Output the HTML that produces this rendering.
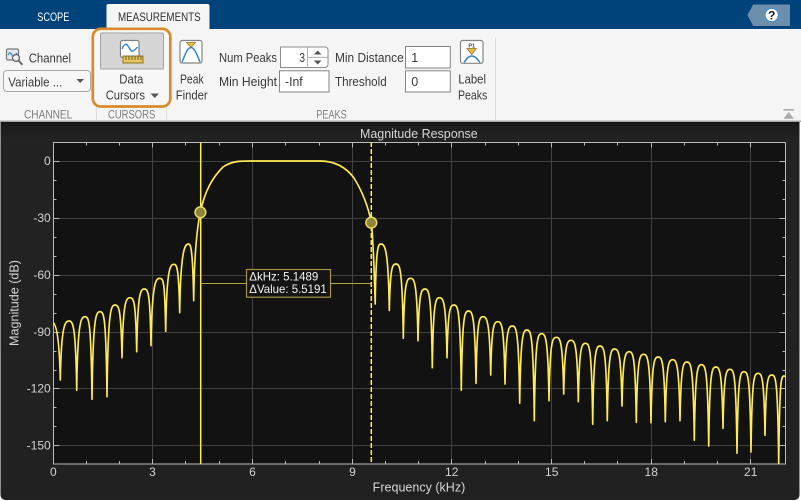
<!DOCTYPE html>
<html><head><meta charset="utf-8"><title>Magnitude Response</title>
<style>
html,body{margin:0;padding:0;background:#fff;width:801px;height:501px;overflow:hidden}
svg{display:block}
text{font-family:"Liberation Sans",sans-serif}
.r{font-size:12.6px;fill:#3a3a3a}
.g{font-size:11.5px;fill:#7c7c7c}
.t{font-size:12px;fill:#d2d2d2}
</style></head><body>
<svg width="801" height="501" viewBox="0 0 801 501" xmlns="http://www.w3.org/2000/svg">
<defs>
<linearGradient id="pg" x1="0" y1="0" x2="0" y2="1"><stop offset="0" stop-color="#131313"/><stop offset="0.015" stop-color="#1e1e1e"/><stop offset="0.05" stop-color="#222"/><stop offset="1" stop-color="#212121"/></linearGradient>
<clipPath id="pc"><rect x="53.5" y="142.5" width="732" height="321.5"/></clipPath>
</defs>
<!-- header -->
<rect x="0" y="0" width="801" height="29" fill="#00427a"/>
<rect x="0" y="29" width="801" height="93" fill="#f5f5f5"/>
<rect x="0" y="29" width="801" height="1" fill="#fdfdfd"/>
<path d="M106.5 29V6a2 2 0 0 1 2-2H207.5a2 2 0 0 1 2 2V30H106.5z" fill="#f5f5f5"/>
<text x="37.3" y="20.9" font-size="11.8" fill="#fff" textLength="32" lengthAdjust="spacingAndGlyphs">SCOPE</text>
<text x="118" y="20.9" font-size="11.8" fill="#303030" textLength="82.7" lengthAdjust="spacingAndGlyphs">MEASUREMENTS</text>
<!-- help -->
<path d="M753.3 4.5H790V26H753.3L747.3 15z" fill="#6d8fae"/>
<circle cx="771.7" cy="15" r="6.6" fill="#fff" stroke="#3d8fd6" stroke-width="1"/>
<text x="771.7" y="19.3" font-size="12" font-weight="bold" fill="#1a1a1a" text-anchor="middle">?</text>
<!-- separators -->
<path d="M96.5 36V120M166.5 36V120M495.5 38V120" stroke="#dcdcdc" stroke-width="1"/>
<!-- channel -->
<g fill="none">
<rect x="6.5" y="49" width="12" height="11" rx="1.5" fill="#e4e8ec" stroke="#777" stroke-width="1.2"/>
<path d="M8 55c1.500-3 2.500-3 4 0s2.500 1 5-2" stroke="#2f87d0" stroke-width="1.200"/>
<circle cx="16" cy="58" r="3.500" fill="#f5f5f5" fill-opacity=".75" stroke="#666" stroke-width="1.200"/>
<path d="M18.500 60.500L22.500 64.800" stroke="#666" stroke-width="2"/>
</g>
<text class="r" x="28.7" y="62.3" textLength="42.3" lengthAdjust="spacingAndGlyphs">Channel</text>
<rect x="3.5" y="70.5" width="87" height="21" rx="3.5" fill="#f7f7f7" stroke="#a8a8a8"/>
<text class="r" x="8.3" y="86.3" textLength="54" lengthAdjust="spacingAndGlyphs">Variable ...</text>
<path d="M76.5 79H84L80.2 83z" fill="#555"/>
<text class="g" x="24" y="118.7" textLength="48.3" lengthAdjust="spacingAndGlyphs">CHANNEL</text>
<!-- data cursors -->
<rect x="92.8" y="28.8" width="77.5" height="77.7" rx="8" fill="#f7f7f7" stroke="#d98a2b" stroke-width="2.7"/>
<rect x="100.5" y="33" width="63" height="36" rx="1" fill="#d5d5d5" stroke="#a2a2a2"/>
<rect x="120.5" y="40.5" width="18.5" height="17" rx="2" fill="#fff" stroke="#808080" stroke-width="1.2"/>
<path d="M122 49c2-5 4-6 6-3s3 6 5 5 3-2 4.500-4" fill="none" stroke="#2f87d0" stroke-width="1.400"/>
<rect x="123" y="56" width="20" height="7" fill="#e7c75f" stroke="#8d7228"/>
<path d="M126 60V56M129 60V56M132 60V56M135 60V56M138 60V56M141 60V56" stroke="#6d5a20" stroke-width="1"/>
<text class="r" x="119.3" y="83.3" textLength="24" lengthAdjust="spacingAndGlyphs">Data</text>
<text class="r" x="105.7" y="99.3" textLength="39.3" lengthAdjust="spacingAndGlyphs">Cursors</text>
<path d="M150.500 93.500H159L154.700 98z" fill="#555"/>
<text class="g" x="108" y="118.7" textLength="47.3" lengthAdjust="spacingAndGlyphs">CURSORS</text>
<!-- peak finder -->
<rect x="180" y="40.5" width="22" height="22.5" rx="2" fill="#fff" stroke="#858585" stroke-width="1.200"/>
<path d="M182 62C186 52 188 47.500 191 47.500S196 52 200 62" fill="none" stroke="#2f87d0" stroke-width="1.500"/>
<path d="M186.500 42.500H195.500L191 47.500z" fill="#e8c040" stroke="#8d7228" stroke-width=".7"/>
<text class="r" x="180" y="83.3" textLength="23.7" lengthAdjust="spacingAndGlyphs">Peak</text>
<text class="r" x="175.7" y="99.3" textLength="32" lengthAdjust="spacingAndGlyphs">Finder</text>
<!-- peaks fields -->
<text class="r" x="219" y="62" textLength="58" lengthAdjust="spacingAndGlyphs">Num Peaks</text>
<text class="r" x="219" y="86" textLength="58" lengthAdjust="spacingAndGlyphs">Min Height</text>
<path d="M280.500 47H325a3 3 0 0 1 3 3V64.500a3 3 0 0 1-3 3H280.500z" fill="#fff" stroke="#8c8c8c"/>
<path d="M307.500 47V67.500M308 57.300H328" stroke="#a0a0a0" stroke-width=".8" fill="none"/>
<text class="r" x="299.2" y="62" textLength="5.8" lengthAdjust="spacingAndGlyphs">3</text>
<path d="M313.800 54.500H321.500L317.700 50.500zM313.800 60.500H321.500L317.700 64.500z" fill="#555"/>
<rect x="279.5" y="70.8" width="49.5" height="21.2" fill="#fff" stroke="#858585"/>
<text class="r" x="285" y="86" textLength="17.7" lengthAdjust="spacingAndGlyphs">-Inf</text>
<text class="r" x="335" y="62" textLength="68.7" lengthAdjust="spacingAndGlyphs">Min Distance</text>
<text class="r" x="335" y="86" textLength="51.7" lengthAdjust="spacingAndGlyphs">Threshold</text>
<rect x="405.5" y="46.5" width="44.8" height="21.5" fill="#fff" stroke="#858585"/>
<rect x="405.5" y="70.8" width="44.8" height="21.2" fill="#fff" stroke="#858585"/>
<text class="r" x="411.3" y="62">1</text>
<text class="r" x="411.3" y="86">0</text>
<!-- label peaks -->
<rect x="460.5" y="40.5" width="22.5" height="22.8" rx="2" fill="#fff" stroke="#858585" stroke-width="1.200"/>
<text x="471.7" y="47.5" font-size="5.5" font-weight="bold" fill="#444" text-anchor="middle">P1</text>
<path d="M467 48.500H476.500L471.700 54.500z" fill="#e8c040" stroke="#8d7228" stroke-width=".7"/>
<path d="M464 62.500C467 58 469 56 471.700 56S477 58 480 62.500" fill="none" stroke="#2f87d0" stroke-width="1.500"/>
<text class="r" x="458.3" y="83.3" textLength="27.7" lengthAdjust="spacingAndGlyphs">Label</text>
<text class="r" x="458" y="99.3" textLength="29.3" lengthAdjust="spacingAndGlyphs">Peaks</text>
<text class="g" x="316.3" y="118.7" textLength="30.4" lengthAdjust="spacingAndGlyphs">PEAKS</text>
<!-- collapse -->
<path d="M783.500 109H794V110.600H783.500zM788.700 112L794 118.700H783.500z" fill="#ababab"/>
<rect x="0" y="120.5" width="801" height="1.5" fill="#a8a8a8"/>
<!-- dark panel -->
<path d="M0.500 122H799.500V495a5 5 0 0 1-5 5H5.500a5 5 0 0 1-5-5z" fill="url(#pg)"/>
<text x="360" y="138" font-size="13" fill="#d6d6d6" textLength="117.7" lengthAdjust="spacingAndGlyphs">Magnitude Response</text>
<!-- plot -->
<rect x="53.5" y="142.5" width="732" height="321.5" fill="#121212"/>
<path d="M152.500 142.500V464M252.500 142.500V464M352.500 142.500V464M451.500 142.500V464M551.500 142.500V464M651.500 142.500V464M750.500 142.500V464M53.500 161.500H785.500M53.500 218.500H785.500M53.500 275.500H785.500M53.500 332.500H785.500M53.500 388.500H785.500M53.500 445.500H785.500" stroke="#424242" stroke-width="1" fill="none"/>
<path fill="none" stroke="#b9b9b9" stroke-width="1" d="M86.500 142.500v3M119.500 142.500v3M152.500 142.500v5M185.500 142.500v3M219.500 142.500v3M252.500 142.500v5M285.500 142.500v3M319.500 142.500v3M352.500 142.500v5M385.500 142.500v3M418.500 142.500v3M451.500 142.500v5M485.500 142.500v3M518.500 142.500v3M551.500 142.500v5M584.500 142.500v3M617.500 142.500v3M651.500 142.500v5M684.500 142.500v3M717.500 142.500v3M750.500 142.500v5M86.500 464v-3M119.500 464v-3M152.500 464v-5M185.500 464v-3M219.500 464v-3M252.500 464v-5M285.500 464v-3M319.500 464v-3M352.500 464v-5M385.500 464v-3M418.500 464v-3M451.500 464v-5M485.500 464v-3M518.500 464v-3M551.500 464v-5M584.500 464v-3M617.500 464v-3M651.500 464v-5M684.500 464v-3M717.500 464v-3M750.500 464v-5M53.500 161.500h6M53.500 180.500h3M53.500 199.500h3M53.500 218.500h6M53.500 237.500h3M53.500 256.500h3M53.500 275.500h6M53.500 294.500h3M53.500 313.500h3M53.500 332.500h6M53.500 351.500h3M53.500 370.500h3M53.500 388.500h6M53.500 407.500h3M53.500 426.500h3M53.500 445.500h6M785.500 161.500h-6M785.500 180.500h-3M785.500 199.500h-3M785.500 218.500h-6M785.500 237.500h-3M785.500 256.500h-3M785.500 275.500h-6M785.500 294.500h-3M785.500 313.500h-3M785.500 332.500h-6M785.500 351.500h-3M785.500 370.500h-3M785.500 388.500h-6M785.500 407.500h-3M785.500 426.500h-3M785.500 445.500h-6"/>
<rect x="53.5" y="142.5" width="732" height="321.5" fill="none" stroke="#bcbcbc" stroke-width="1"/>
<!-- response -->
<g clip-path="url(#pc)">
<path fill="none" stroke="#ffeb55" stroke-width="1.650" stroke-linejoin="round" d="M53.300 322.700C56 325 59.300 335 60.300 380
C61.300 325 65 321 69 321C73 321 75.700 325 76.700 390.300
C77.700 320.700 81 316.700 85 316.700C89 316.700 91 320.700 92 399.300
C93 315.700 96 311.700 100 311.700C104 311.700 106 315.700 107 396.700
C108 309 111 305 115 305C119 305 121 309 122 357.700
C123 301.700 126 297.700 130 297.700C134 297.700 135.700 301.700 136.700 351.700
C137.700 293 140.300 289 144.300 289C148.300 289 150 293 151 345.700
C152 282.300 155.700 278.300 159.700 278.300C163.700 278.300 164.700 282.300 165.700 331.300
C166.700 268.300 170 264.300 174 264.300C177 264.300 178.700 268.300 179.700 312.700
C180.700 248 185 244 188.500 244C191 244 192.700 250 193.700 300.700
C194.200 262 196.500 230 200.400 212C205 190 213 177 223 167C232 161 240 161 250 161L320 161C333 161 345 166 354 178C362 191 368 205 371.300 222.700C372.800 235 374 262 375.200 304
C376 248 378 244 380.700 244C385 244 388.300 248 389.300 310.500
C390.300 268 392 264 396 264C400 264 402.300 268 403.300 338.300
C404.300 282.300 406.500 278.300 410.500 278.300C414.500 278.300 417 282.300 418 340.700
C419 293 421 289 425 289C429 289 431.300 293 432.300 367.700
C433.300 301.700 435.500 297.700 439.500 297.700C443.500 297.700 446 301.700 447 357.700
C448 309 450 305 454 305C458 305 460.300 309 461.300 390.300
C462.300 315 464.500 311 468.500 311C472.500 311 475 315 476 383.300
C477 320.700 479 316.700 483 316.700C487 316.700 489.700 320.700 490.700 375
C491.700 325.700 493.800 321.700 497.800 321.700C501.800 321.700 504 325.700 505 384
C506 330 508.300 326 512.300 326C516.300 326 518.700 330 519.700 403.300
C520.700 334 523 330 527 330C531 330 533.300 334 534.300 420.700
C535.300 337.700 537.600 333.700 541.600 333.700C545.600 333.700 548 337.700 549 400.700
C550 341.300 552.300 337.300 556.300 337.300C560.300 337.300 562.700 341.300 563.700 394
C564.700 344.300 567 340.300 571 340.300C575 340.300 577.300 344.300 578.300 401.700
C579.300 347.300 581.500 343.300 585.500 343.300C589.500 343.300 591.700 347.300 592.700 424.300
C593.700 350 596 346 600 346C604 346 606.300 350 607.300 420.700
C608.300 353 610.600 349 614.600 349C618.600 349 621 353 622 406
C623 355.700 625.200 351.700 629.200 351.700C633.200 351.700 635.300 355.700 636.300 422.300
C637.300 358.300 639.600 354.300 643.600 354.300C647.600 354.300 650 358.300 651 422.700
C652 361 654.200 357 658.200 357C662.200 357 664.300 361 665.300 421.700
C666.300 363.700 668.600 359.700 672.600 359.700C676.600 359.700 679 363.700 680 420.700
C681 366 683 362 687 362C691 362 693.300 366 694.300 440.300
C695.300 368.700 697.500 364.700 701.500 364.700C705.500 364.700 707.700 368.700 708.700 446
C709.700 371 711.800 367 715.800 367C719.800 367 722 371 723 428.300
C724 373.300 726 369.300 730 369.300C734 369.300 736 373.300 737 453.300
C738 375.700 740 371.700 744 371.700C748 371.700 750 375.700 751 452
C752 377.300 754 373.300 758 373.300C762 373.300 764 377.300 765 435.300
C766 379 767.800 375 771.800 375C775.800 375 777.700 379 778.700 464
C779.700 380 781 376 784 376C785 376 786 377 787 379"/>
<!-- cursors -->
<path d="M200.700 142V464" stroke="#ffeb55" stroke-width="1.500"/>
<path d="M371.300 142V464" stroke="#ffeb55" stroke-width="1.500" stroke-dasharray="5 2"/>
</g>
<path d="M200.700 283.500H371.300" stroke="#b3a745" stroke-width="1"/>
<circle cx="200.400" cy="212.300" r="5.400" fill="#8f853a" stroke="#e9dc58" stroke-width="1.500"/>
<circle cx="371.300" cy="222.700" r="5.400" fill="#8f853a" stroke="#e9dc58" stroke-width="1.500"/>
<rect x="246.5" y="269.5" width="84" height="27.7" fill="#141414" stroke="#a39344" stroke-width="1.200"/>
<text x="249.3" y="280.3" font-size="12" fill="#f4f4f4" textLength="69" lengthAdjust="spacingAndGlyphs">ΔkHz: 5.1489</text>
<text x="249.3" y="293" font-size="12" fill="#f4f4f4" textLength="77.4" lengthAdjust="spacingAndGlyphs">ΔValue: 5.5191</text>
<!-- tick labels -->
<g text-anchor="end">
<text class="t" x="50.7" y="165">0</text>
<text class="t" x="50.7" y="222">-30</text>
<text class="t" x="50.7" y="279">-60</text>
<text class="t" x="50.7" y="336">-90</text>
<text class="t" x="50.7" y="392.5">-120</text>
<text class="t" x="50.7" y="449.5">-150</text>
</g>
<g text-anchor="middle">
<text class="t" x="53.3" y="476">0</text>
<text class="t" x="152.5" y="476">3</text>
<text class="t" x="252.5" y="476">6</text>
<text class="t" x="352.5" y="476">9</text>
<text class="t" x="451.7" y="476">12</text>
<text class="t" x="551.7" y="476">15</text>
<text class="t" x="651.2" y="476">18</text>
<text class="t" x="750.7" y="476">21</text>
</g>
<text x="372.7" y="491.7" font-size="12.5" fill="#d6d6d6" textLength="92.6" lengthAdjust="spacingAndGlyphs">Frequency (kHz)</text>
<text transform="translate(18.300 346) rotate(-90)" font-size="12.5" fill="#d6d6d6" textLength="86" lengthAdjust="spacingAndGlyphs">Magnitude (dB)</text>
</svg>
</body></html>
